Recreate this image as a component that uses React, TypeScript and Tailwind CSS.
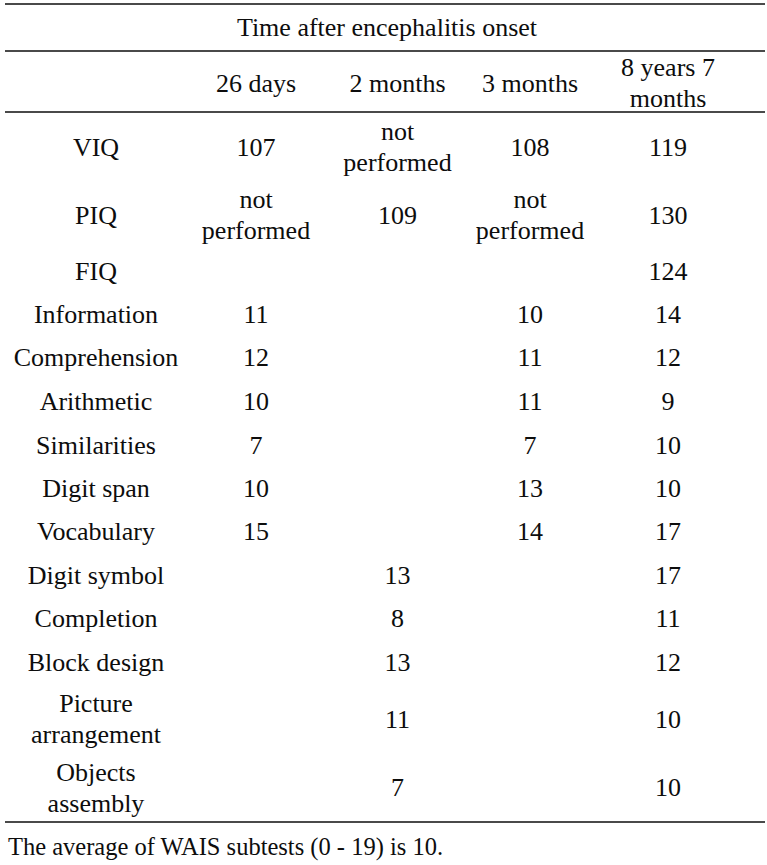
import React from 'react';

type Row = {
  label: string[];
  cells: (string[] | null)[];
  height: string;
};

const cols = 'grid grid-cols-[182px_138px_145px_120px_156px]';

const rows: Row[] = [
  { label: ['VIQ'], cells: [['107'], ['not', 'performed'], ['108'], ['119']], height: 'h-[68px]' },
  { label: ['PIQ'], cells: [['not', 'performed'], ['109'], ['not', 'performed'], ['130']], height: 'h-[68px]' },
  { label: ['FIQ'], cells: [null, null, null, ['124']], height: 'h-[44px]' },
  { label: ['Information'], cells: [['11'], null, ['10'], ['14']], height: 'h-[43px]' },
  { label: ['Comprehension'], cells: [['12'], null, ['11'], ['12']], height: 'h-[43px]' },
  { label: ['Arithmetic'], cells: [['10'], null, ['11'], ['9']], height: 'h-[44px]' },
  { label: ['Similarities'], cells: [['7'], null, ['7'], ['10']], height: 'h-[44px]' },
  { label: ['Digit span'], cells: [['10'], null, ['13'], ['10']], height: 'h-[43px]' },
  { label: ['Vocabulary'], cells: [['15'], null, ['14'], ['17']], height: 'h-[43px]' },
  { label: ['Digit symbol'], cells: [null, ['13'], null, ['17']], height: 'h-[44px]' },
  { label: ['Completion'], cells: [null, ['8'], null, ['11']], height: 'h-[43px]' },
  { label: ['Block design'], cells: [null, ['13'], null, ['12']], height: 'h-[44px]' },
  { label: ['Picture', 'arrangement'], cells: [null, ['11'], null, ['10']], height: 'h-[70px]' },
  { label: ['Objects', 'assembly'], cells: [null, ['7'], null, ['10']], height: 'h-[67px]' },
];

const Rule = () => <div className="h-[2px] w-[760px] bg-[#4a4a4a]" />;

const Cell = ({ lines }: { lines: string[] | null }) => (
  <div className="flex flex-col items-center justify-center text-center leading-[31px]">
    {lines?.map((l) => (
      <span key={l} className="whitespace-nowrap">
        {l}
      </span>
    ))}
  </div>
);

export default function App() {
  return (
    <div className="min-h-[865px] w-[767px] bg-white pl-[5px] pt-[3px] text-[26px] text-[#0d0d0d] font-['Liberation_Serif','Times_New_Roman',serif]">
      <Rule />
      <div className="flex h-[45px] w-[760px] items-center justify-center pl-[4px] leading-[31px]">
        Time after encephalitis onset
      </div>
      <Rule />
      <div className={`${cols} h-[59px]`}>
        <div />
        <Cell lines={['26 days']} />
        <Cell lines={['2 months']} />
        <Cell lines={['3 months']} />
        <Cell lines={['8 years 7', 'months']} />
      </div>
      <Rule />
      {rows.map((row) => (
        <div key={row.label.join(' ')} className={`${cols} ${row.height}`}>
          <Cell lines={row.label} />
          {row.cells.map((c, i) => (
            <Cell key={i} lines={c} />
          ))}
        </div>
      ))}
      <Rule />
      <p className="pl-[3px] pt-[9px] text-[24.5px] leading-[30px]">
        The average of WAIS subtests (0 - 19) is 10.
      </p>
    </div>
  );
}
